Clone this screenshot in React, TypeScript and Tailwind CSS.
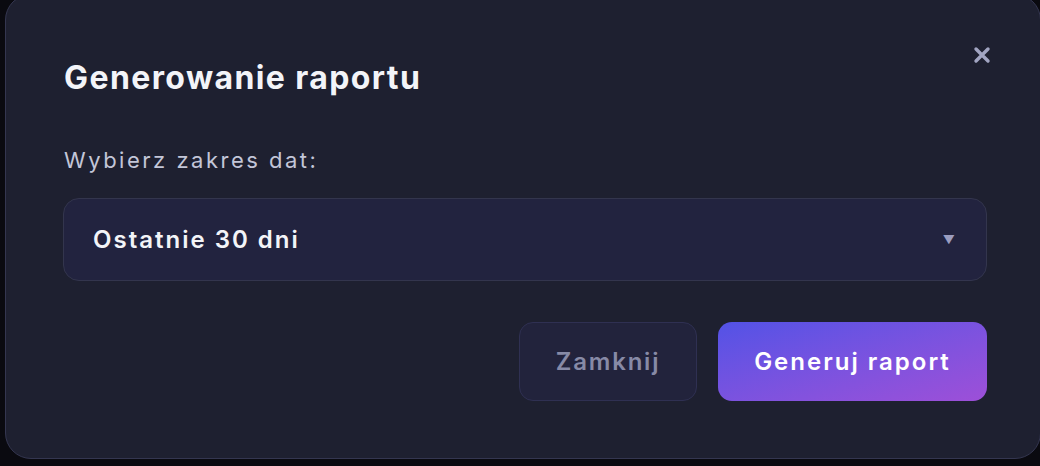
export default function App() {
  return (
    <div className="w-[1040px] h-[466px] bg-[#0a0a10] overflow-hidden relative" style={{ fontFamily: '"Inter", "Noto Sans", sans-serif' }}>
      <div className="absolute left-[5px] top-[-6px] w-[1036px] h-[465px] rounded-[26px] bg-[#1e2030] border border-[#343650] px-[57px] pt-[65px]">
        <button className="absolute right-[48px] top-[50px] text-[#a2a5c2]">
          <svg width="20" height="20" viewBox="0 0 20 20"><path d="M4 4L16 16M16 4L4 16" stroke="currentColor" strokeWidth="3.4" strokeLinecap="round" /></svg>
        </button>
        <h2 className="text-[32px] leading-[36px] font-bold text-[#f3f4f8] tracking-[1.4px] pl-[1px]">Generowanie raportu</h2>
        <div className="mt-[50px] text-[22px] leading-[28px] text-[#c3c6d8] tracking-[2.5px] pl-[1px]">Wybierz zakres dat:</div>
        <div className="mt-[24px] h-[83px] w-[924px] rounded-[16px] bg-[#22233f] border border-[#33354d] flex items-center justify-between pl-[29px] pr-[31px]">
          <span className="text-[24px] font-semibold text-[#f3f4f8] tracking-[2px]">Ostatnie 30 dni</span>
          <span className="text-[12px] text-[#9b9dc0]">▼</span>
        </div>
        <div className="mt-[41px] w-[924px] flex justify-end gap-[21px]">
          <button className="w-[178px] h-[79px] rounded-[14px] bg-[#22233c] border border-[#2f3052] text-[24px] font-semibold text-[#878aa6] tracking-[1.8px]">Zamknij</button>
          <button className="w-[269px] h-[79px] rounded-[14px] bg-gradient-to-br from-[#5252e6] to-[#9d4fd8] text-[24px] font-semibold text-white tracking-[2px]">Generuj raport</button>
        </div>
      </div>
    </div>
  );
}
